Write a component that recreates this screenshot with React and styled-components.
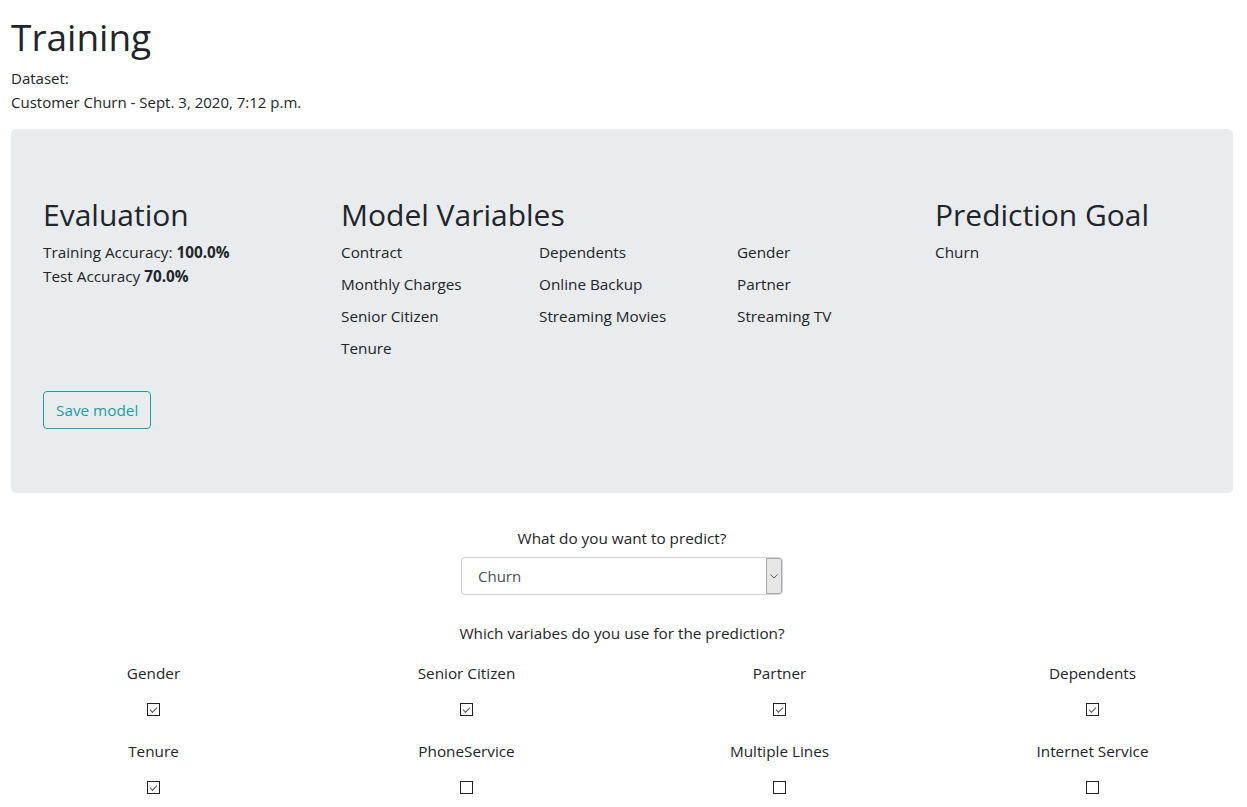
import styled, { createGlobalStyle } from "styled-components";

const GlobalStyle = createGlobalStyle`
    html, body {
        margin: 0;
        padding: 0;
        background: #fff;
        overflow-x: hidden;
    }
    body {
        font-family: "Open Sans", "Noto Sans", sans-serif;
        font-size: 15.3px;
        line-height: 1.5;
        color: #212529;
    }
`

const Page = styled.div`
    padding: 14px 14px 0 11px;
`

const PageTitle = styled.h1`
    margin: 0 0 6px 0;
    font-size: 37px;
    font-weight: 400;
    line-height: 46px;
`

const DatasetInfo = styled.p`
    margin: 0 0 15px 0;
    font-size: 15px;
    line-height: 24px;
`

const Jumbotron = styled.div`
    background: #e9ecef;
    border-radius: 5px;
    padding: 68px 32px 64px 32px;
    display: grid;
    grid-template-columns: 298px 594px 1fr;
`

const Column = styled.div`
    display: flex;
    flex-direction: column;
`

const SectionTitle = styled.h2`
    margin: 0 0 7px 0;
    font-size: 30px;
    font-weight: 400;
    line-height: 36px;
`

const InfoLine = styled.div`
    font-size: 15.3px;
    line-height: 24px;
    b {
        font-weight: 700;
    }
`

const VariableGrid = styled.div`
    display: grid;
    grid-template-columns: repeat(3, 198px);
    row-gap: 8px;
`

const Variable = styled.div`
    font-size: 15.3px;
    line-height: 24px;
`

const ButtonRow = styled.div`
    grid-column: 1 / -1;
    margin-top: 31px;
`

const OutlineButton = styled.button`
    font-family: inherit;
    font-size: 15.3px;
    line-height: 24px;
    padding: 6px 12px;
    color: #17a2a0;
    background: transparent;
    border: 1px solid #17a2a0;
    border-radius: 4px;
    cursor: pointer;
`

const PredictSection = styled.div`
    display: flex;
    flex-direction: column;
    align-items: center;
    padding-top: 33px;
`

const Question = styled.div`
    font-size: 15.3px;
    line-height: 24px;
    margin-bottom: ${p => p.$gap || 0}px;
    text-align: center;
`

const SelectWrap = styled.div`
    position: relative;
    width: 322px;
    height: 38px;
    margin-bottom: 26px;
`

const Select = styled.select`
    appearance: none;
    width: 100%;
    height: 100%;
    box-sizing: border-box;
    font-family: inherit;
    font-size: 15px;
    color: #495057;
    padding: 0 16px;
    background: #fff;
    border: 1px solid #ced4da;
    border-radius: 4px;
    outline: none;
`

const SelectArrow = styled.div`
    position: absolute;
    top: 1px;
    right: 1px;
    width: 16px;
    height: 36px;
    box-sizing: border-box;
    background: #e6e6e6;
    border: 1px solid #a9a9a9;
    border-radius: 0 3px 3px 0;
    display: flex;
    align-items: center;
    justify-content: center;
    pointer-events: none;
`

const VariableChoices = styled.div`
    display: grid;
    grid-template-columns: repeat(4, 313px);
    margin-left: -14px;
    width: 1252px;
    padding-top: 16px;
`

const Choice = styled.div`
    display: flex;
    flex-direction: column;
    align-items: center;
    height: 78px;
`

const ChoiceLabel = styled.label`
    font-size: 15.3px;
    line-height: 24px;
    margin-bottom: 18px;
`

const CheckBox = styled.input.attrs({ type: "checkbox" })`
    appearance: none;
    margin: 0;
    width: 13px;
    height: 13px;
    box-sizing: border-box;
    border: 1px solid #222;
    background: #fff;
    position: relative;
    &:checked::after {
        content: "";
        position: absolute;
        left: 3px;
        top: 0px;
        width: 6px;
        height: 3px;
        border-left: 1.3px solid #555;
        border-bottom: 1.3px solid #555;
        transform: translate(-1px, 3px) rotate(-45deg);
    }
`

const modelVariables = [
    "Contract", "Dependents", "Gender",
    "Monthly Charges", "Online Backup", "Partner",
    "Senior Citizen", "Streaming Movies", "Streaming TV",
    "Tenure",
]

const choices = [
    { name: "Gender", checked: true },
    { name: "Senior Citizen", checked: true },
    { name: "Partner", checked: true },
    { name: "Dependents", checked: true },
    { name: "Tenure", checked: true },
    { name: "PhoneService", checked: false },
    { name: "Multiple Lines", checked: false },
    { name: "Internet Service", checked: false },
]

export default function App() {
    return (
        <Page>
            <GlobalStyle />
            <PageTitle>Training</PageTitle>
            <DatasetInfo>
                Dataset:<br />
                Customer Churn - Sept. 3, 2020, 7:12 p.m.
            </DatasetInfo>
            <Jumbotron>
                <Column>
                    <SectionTitle>Evaluation</SectionTitle>
                    <InfoLine>Training Accuracy: <b>100.0%</b></InfoLine>
                    <InfoLine>Test Accuracy <b>70.0%</b></InfoLine>
                </Column>
                <Column>
                    <SectionTitle>Model Variables</SectionTitle>
                    <VariableGrid>
                        {modelVariables.map(v => (
                            <Variable key={v}>{v}</Variable>
                        ))}
                    </VariableGrid>
                </Column>
                <Column>
                    <SectionTitle>Prediction Goal</SectionTitle>
                    <InfoLine>Churn</InfoLine>
                </Column>
                <ButtonRow>
                    <OutlineButton>Save model</OutlineButton>
                </ButtonRow>
            </Jumbotron>
            <PredictSection>
                <Question $gap={7}>What do you want to predict?</Question>
                <SelectWrap>
                    <Select defaultValue="Churn">
                        <option>Churn</option>
                    </Select>
                    <SelectArrow>
                        <svg width="8" height="5" viewBox="0 0 8 5">
                            <path d="M0.5 0.5 L4 4 L7.5 0.5" fill="none" stroke="#555" strokeWidth="1" />
                        </svg>
                    </SelectArrow>
                </SelectWrap>
                <Question>Which variabes do you use for the prediction?</Question>
            </PredictSection>
            <VariableChoices>
                {choices.map(c => (
                    <Choice key={c.name}>
                        <ChoiceLabel>{c.name}</ChoiceLabel>
                        <CheckBox defaultChecked={c.checked} />
                    </Choice>
                ))}
            </VariableChoices>
        </Page>
    );
}
